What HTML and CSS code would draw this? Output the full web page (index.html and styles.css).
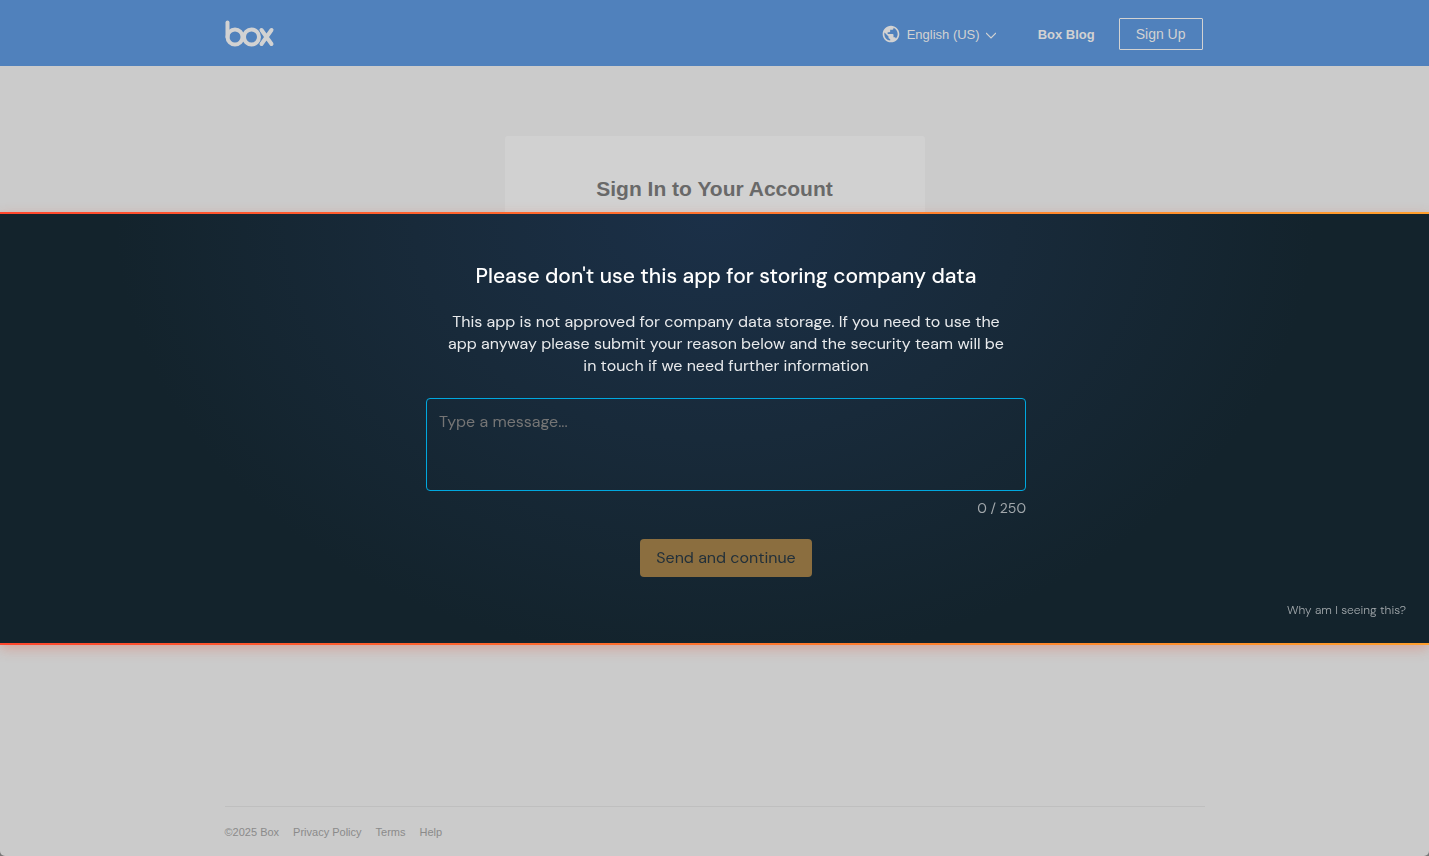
FILE: index.html
```html
<!DOCTYPE html>
<html lang="en">
<head>
    <meta charset="UTF-8">
    <meta name="viewport" content="width=device-width, initial-scale=1.0">
    <title>Box | Login</title>
    <link rel="stylesheet" href="styles.css">
</head>
<body>
    <div class="page">
        <header class="header">
            <div class="container header-inner">
                <a href="#" class="logo" aria-label="Box">
                    <svg width="50" height="28" viewBox="0 0 50 28" fill="none" stroke="currentColor" stroke-width="4" stroke-linecap="round" stroke-linejoin="round">
                        <path d="M2.5 2.500v14.500"/>
                        <circle cx="10" cy="17" r="7.5"/>
                        <circle cx="26.5" cy="17" r="7.5"/>
                        <path d="M36.5 10l10 14M46.500 10l-10 14"/>
                    </svg>
                </a>
                <nav class="nav">
                    <button type="button" class="language">
                        <svg width="20" height="20" viewBox="0 0 24 24" fill="currentColor">
                            <path d="M12 2C6.480 2 2 6.480 2 12s4.480 10 10 10 10-4.480 10-10S17.520 2 12 2zm-1 17.930c-3.950-.49-7-3.850-7-7.930 0-.62.080-1.210.21-1.790L9 15v1c0 1.100.9 2 2 2v1.930zm6.900-2.540c-.26-.81-1-1.390-1.900-1.390h-1v-3c0-.55-.45-1-1-1H8v-2h2c.55 0 1-.45 1-1V7h2c1.100 0 2-.9 2-2v-.41c2.930 1.190 5 4.060 5 7.410 0 2.080-.8 3.970-2.100 5.390z"/>
                        </svg>
                        <span>English (US)</span>
                        <svg width="10" height="12" viewBox="0 0 10 12" fill="none" stroke="currentColor" stroke-width="1.200">
                            <path d="M0 5l5 5 5-5"/>
                        </svg>
                    </button>
                    <a href="#" class="blog">Box Blog</a>
                    <a href="#" class="signup">Sign Up</a>
                </nav>
            </div>
        </header>

        <main class="main">
            <div class="card">
                <h1>Sign In to Your Account</h1>
            </div>
        </main>

        <footer class="container footer">
            <span>©2025 Box</span>
            <a href="#">Privacy Policy</a>
            <a href="#">Terms</a>
            <a href="#">Help</a>
        </footer>
    </div>

    <!-- Warning banner over the login page -->
    <div class="overlay">
        <section class="warning" role="dialog" aria-labelledby="warningTitle">
            <form class="warning-form">
                <h2 id="warningTitle">Please don't use this app for storing company data</h2>
                <label for="reason">This app is not approved for company data storage. If you need to use the app anyway please submit your reason below and the security team will be in touch if we need further information</label>
                <textarea id="reason" maxlength="250" placeholder="Type a message..."></textarea>
                <div class="counter">0 / 250</div>
                <button type="submit" class="send" disabled>Send and continue</button>
            </form>
            <a href="#" class="why">Why am I seeing this?</a>
        </section>
    </div>
</body>
</html>
```
FILE: styles.css
```css
* {
    box-sizing: border-box;
}

html {
    background-color: #777;
}

body {
    margin: 0;
    font-family: "Helvetica Neue", "Liberation Sans", Arial, sans-serif;
}

a {
    color: inherit;
    text-decoration: none;
}

button {
    font-family: inherit;
    border: none;
    cursor: pointer;
}

.page {
    min-height: 100vh;
    display: flex;
    flex-direction: column;
    background-color: #cbcbcb;
    border-radius: 0 0 5px 5px;
}

.container {
    width: 100%;
    max-width: 980px;
    margin: 0 auto;
}

/* Header */
.header {
    background-color: #5081bc;
    color: #d2d2d2;
}

.header-inner {
    height: 66px;
    padding-top: 2px;
    display: flex;
    align-items: center;
    justify-content: space-between;
}

.logo svg {
    display: block;
}

.nav {
    display: flex;
    align-items: center;
    font-size: 13px;
    margin-right: 2px;
}

.language {
    display: flex;
    align-items: center;
    gap: 6px;
    padding: 0;
    background: none;
    color: inherit;
    font-size: 13px;
}

.blog {
    margin: 0 24px 0 42px;
    font-weight: bold;
}

.signup {
    padding: 0 16px;
    border: 1px solid #d2d2d2;
    border-radius: 1px;
    font-size: 14px;
    line-height: 30px;
}

/* Login card */
.main {
    flex: 1;
    padding-top: 70px;
}

.card {
    width: 420px;
    max-width: 100%;
    min-height: 400px;
    margin: 0 auto;
    padding-top: 40px;
    background-color: #d1d1d1;
    border-radius: 3px;
    text-align: center;
}

.card h1 {
    margin: 0;
    font-size: 21px;
    line-height: 26px;
    color: #696969;
}

.footer {
    display: flex;
    gap: 14px;
    padding: 18px 0 17px;
    border-top: 1px solid #bfbfbf;
    font-size: 11px;
    line-height: 14px;
    color: #8a8a8a;
}

/* Warning banner */
.overlay {
    position: fixed;
    top: 0;
    left: 0;
    width: 100%;
    height: 100%;
    display: flex;
    align-items: center;
}

.warning {
    width: 100%;
    padding: 48px 23px 24px 46px;
    display: flex;
    flex-direction: column;
    border: solid;
    border-width: 2px 0;
    border-image: linear-gradient(90deg, #ff472d, #ff9f2c) 1;
    background: radial-gradient(ellipse 600px 450px at 50% 0, #1b3048, #182a3a 50%, #13232c);
    box-shadow: 0 4px 12px rgba(230, 80, 50, 0.3);
    color: #fff;
    font-family: "DM Sans", Inter, sans-serif;
}

.warning-form {
    width: 600px;
    max-width: 100%;
    margin: 0 auto;
    display: flex;
    flex-direction: column;
    align-items: center;
    text-align: center;
}

.warning-form h2 {
    margin: 0 0 21px;
    font-size: 21px;
    font-weight: 500;
    line-height: 28px;
}

.warning-form label {
    padding: 0 16px;
    font-size: 16px;
    line-height: 22px;
    color: #e8eaec;
}

.warning-form textarea {
    width: 100%;
    height: 93px;
    margin-top: 21px;
    padding: 12px;
    border: 1px solid #00a8df;
    border-radius: 4px;
    outline: none;
    resize: none;
    background: transparent;
    color: #fff;
    font-family: inherit;
    font-size: 16px;
    line-height: 22px;
}

.warning-form textarea::placeholder {
    color: #757575;
}

.counter {
    align-self: flex-end;
    margin: 7px 0 21px;
    font-size: 14px;
    line-height: 20px;
    color: #a1a7ab;
}

.send {
    padding: 8px 16px;
    border-radius: 4px;
    background-color: #8b6e3f;
    color: #22303a;
    font-size: 16px;
    line-height: 22px;
}

.why {
    align-self: flex-end;
    margin-top: 24px;
    font-size: 12px;
    font-weight: 300;
    line-height: 18px;
    color: #a1a7ab;
}
```
